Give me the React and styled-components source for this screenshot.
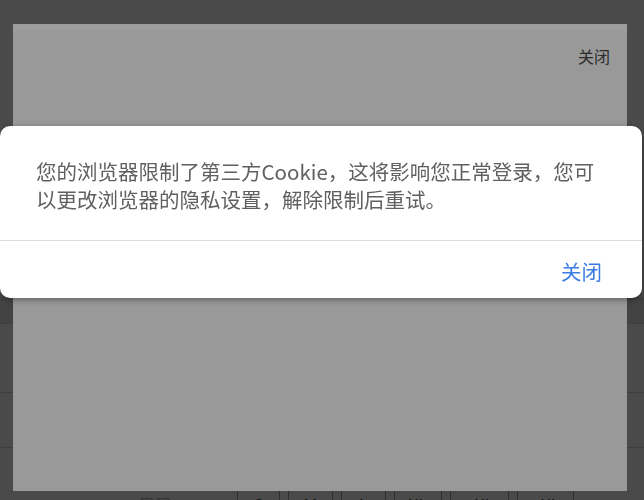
import React from "react";
import styled, { createGlobalStyle } from "styled-components";

const GlobalStyle = createGlobalStyle`
  html, body {
    margin: 0;
    padding: 0;
    background-color: #4a4a4a;
    font-family: "Noto Sans CJK SC", "Noto Sans", sans-serif;
    overflow: hidden;
  }
`;

// la página de fondo, ya oscurecida por las dos máscaras
const Page = styled.div`
  width: 644px;
  height: 500px;
  display: flex;
  flex-direction: column;
  background-color: #4a4a4a;
`;

const Spacer = styled.div`
  height: ${({ $h }) => $h}px;
  flex: none;
`;

const Band = styled.div`
  height: 26px;
  flex: none;
  background-color: #434343;
`;

const ListRow = styled.div`
  height: ${({ $h }) => $h}px;
  flex: none;
  border-top: 1px solid #3e3e3e;
`;

const SizeRow = styled.div`
  display: flex;
  align-items: center;
  height: 36px;
  flex: none;
`;

const SizeLabel = styled.span`
  padding-left: 138px;
  box-sizing: border-box;
  width: 237px;
  padding-top: 6px;
  font-size: 17px;
  color: #343434;
`;

const SizeList = styled.div`
  display: flex;
  gap: 8px;
`;

const SizeBox = styled.div`
  width: ${({ $w }) => $w}px;
  height: 36px;
  box-sizing: border-box;
  border: 1px solid #2f2f2f;
  display: flex;
  align-items: center;
  justify-content: center;
  padding-top: 6px;
  font-size: 17px;
  color: #141414;
`;

// hoja gris (popup de tallas bajo la máscara)
const Sheet = styled.div`
  position: absolute;
  top: 24px;
  left: 13px;
  width: 614px;
  height: 467px;
  background-color: #989998;
  border-top: 6px solid #9c9d9c;
  box-sizing: border-box;
  display: flex;
  justify-content: flex-end;
  align-items: flex-start;
  padding: 15px 17px 0 0;
`;

const SheetClose = styled.span`
  font-size: 16px;
  line-height: 22px;
  color: #2b2b2b;
  cursor: pointer;
`;

const Dialog = styled.div`
  position: fixed;
  top: 126px;
  left: 0;
  width: 642px;
  background-color: #ffffff;
  border-radius: 10px;
  box-shadow: 0 2px 6px rgba(0, 0, 0, 0.35);
  overflow: hidden;
`;

const DialogBody = styled.div`
  padding: 31px 36px 27px 36px;
  border-bottom: 1px solid #dcdcdc;
`;

const Message = styled.p`
  margin: 0;
  font-size: 20.5px;
  line-height: 28px;
  color: #606060;
`;

const DialogFooter = styled.div`
  height: 57px;
  display: flex;
  align-items: center;
  justify-content: flex-end;
  padding: 2px 40px 0 0;
  box-sizing: border-box;
`;

const FooterButton = styled.button`
  border: none;
  background: none;
  padding: 0;
  font-family: inherit;
  font-size: 20.5px;
  line-height: 28px;
  color: #3c7ce4;
  cursor: pointer;
`;

const sizes = [
  { name: "S", w: 43 },
  { name: "M", w: 45 },
  { name: "L", w: 45 },
  { name: "XL", w: 48 },
  { name: "2XL", w: 59 },
  { name: "3XL", w: 57 },
];

const App = () => {
  return (
    <>
      <GlobalStyle />
      <Page>
        <Spacer $h={297} />
        <Band />
        <ListRow $h={68} />
        <ListRow $h={54} />
        <ListRow $h={35} />
        <SizeRow>
          <SizeLabel>尺码</SizeLabel>
          <SizeList>
            {sizes.map((s) => (
              <SizeBox key={s.name} $w={s.w}>
                {s.name}
              </SizeBox>
            ))}
          </SizeList>
        </SizeRow>
      </Page>

      <Sheet>
        <SheetClose>关闭</SheetClose>
      </Sheet>

      <Dialog>
        <DialogBody>
          <Message>
            您的浏览器限制了第三方Cookie，这将影响您正常登录，您可
            <br />
            以更改浏览器的隐私设置，解除限制后重试。
          </Message>
        </DialogBody>
        <DialogFooter>
          <FooterButton>关闭</FooterButton>
        </DialogFooter>
      </Dialog>
    </>
  );
};

export default App;
